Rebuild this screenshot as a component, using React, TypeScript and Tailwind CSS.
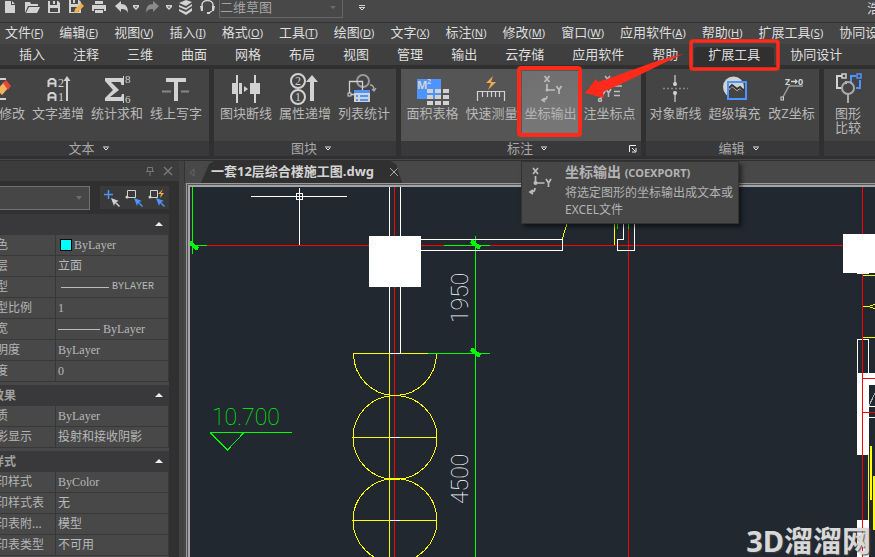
import React from "react";

const G = "#d2d2d2";
const BLUE = "#4d94ff";

const menus: [string, string][] = [
  ["文件", "F"], ["编辑", "E"], ["视图", "V"], ["插入", "I"], ["格式", "O"],
  ["工具", "T"], ["绘图", "D"], ["文字", "X"], ["标注", "N"], ["修改", "M"],
  ["窗口", "W"], ["应用软件", "A"], ["帮助", "H"], ["扩展工具", "S"], ["协同设计", "C"],
];

const tabs = ["插入", "注释", "三维", "曲面", "网格", "布局", "视图", "管理", "输出", "云存储", "应用软件", "帮助", "扩展工具", "协同设计"];

function Icon({ children }: { children: React.ReactNode }) {
  return (
    <svg width="48" height="35" viewBox="0 0 48 35" className="shrink-0" fill="none" stroke={G} strokeWidth="2" aria-hidden="true">
      {children}
    </svg>
  );
}

function Glyph({ x, y, size, serif, color, children }: { x: number; y: number; size: number; serif?: boolean; color?: string; children: string }) {
  return (
    <text x={x} y={y} fontSize={size} fill={color ?? G} stroke="none" fontWeight={serif ? 400 : 700} fontFamily={serif ? "Liberation Serif, serif" : "Noto Sans, sans-serif"}>
      {children}
    </text>
  );
}

function EditIcon() {
  return (
    <Icon>
      <path d="M25 8h6M25 28h6" />
      <path d="M22 19l7-8 5 5-7 8z" fill="#f2b35c" stroke="none" />
      <path d="M28 12l3-3 5 6-3 4z" fill="#e8453c" stroke="none" />
    </Icon>
  );
}
function TextStepIcon() {
  return (
    <Icon>
      <path d="M14.500 16V10l2-2h3l2 2v6M14.500 12.500h7M14.500 30v-6l2-2h3l2 2v6M14.500 26.500h7" />
      <Glyph x={24} y={16} size={12} serif>2</Glyph>
      <Glyph x={24} y={30} size={12} serif>1</Glyph>
      <path d="M33 30V8" />
      <path d="M33 5l3.500 5h-7z" fill={G} stroke="none" />
    </Icon>
  );
}
function SumIcon() {
  return (
    <Icon>
      <path d="M12 7h18v7h-1.500l-1-3H18l8 8-9 7h11l1-3H30v7H12v-3l8-8-8-9z" fill={G} stroke="none" />
      <path d="M30.500 5v9M30.500 23v9" strokeWidth="1" />
      <Glyph x={32} y={12} size={11} serif>8</Glyph>
      <Glyph x={32} y={32} size={11} serif>6</Glyph>
    </Icon>
  );
}
function LineTextIcon() {
  return (
    <Icon>
      <path d="M14 7h20v4h-8v19h-4V11h-8z" fill={G} stroke="none" />
      <path d="M10 20.500h9M29 20.500h8" stroke="#888" />
    </Icon>
  );
}
function BlockBreakIcon() {
  return (
    <Icon>
      <path d="M10 12h5v11h-5zM17 12h3v11h-3zM28 12h4v11h-4zM34 12h4v11h-4z" fill={G} stroke="none" />
      <path d="M15 4v28M33 4v28" />
      <path d="M22 15l4 3-4 3z" fill={G} stroke="none" />
    </Icon>
  );
}
function AttrStepIcon() {
  return (
    <Icon>
      <circle cx="17" cy="10" r="7" />
      <circle cx="17" cy="26" r="7" />
      <Glyph x={14} y={14} size={12} serif>2</Glyph>
      <Glyph x={14} y={30} size={12} serif>1</Glyph>
      <path d="M31 4l6 7h-4v19h-4V11h-4z" fill={G} stroke="none" />
    </Icon>
  );
}
function ListIcon() {
  return (
    <Icon>
      <circle cx="23" cy="10" r="6" stroke="#999" />
      <path d="M9.500 23V10.500h13V22M9.500 23.500h6" strokeWidth="1.300" />
      <rect x="8" y="22" width="3" height="3" fill="#444" strokeWidth="1" />
      <rect x="14" y="19" width="16" height="12" fill={G} stroke="none" />
      <path d="M14 19h16v3H14zM16 24h2v2h-2zM16 28h2v2h-2zM20 24h8v2h-8zM20 28h8v2h-8z" fill={BLUE} stroke="none" />
      <path d="M30 14c3 0 4 2 4 5m-2-1l2 2 2-3" stroke="#aaa" strokeWidth="1.300" />
    </Icon>
  );
}
function AreaIcon() {
  return (
    <Icon>
      <rect x="9" y="8" width="24" height="20" fill={BLUE} stroke="none" />
      <Glyph x={9} y={18} size={11}>M</Glyph>
      <Glyph x={19} y={13} size={7}>2</Glyph>
      <g fill={G} stroke="none">
        {[18, 24, 30].map((y) => [19, 27, 35].map((x) => <rect key={`${x}-${y}`} x={x} y={y} width="6" height="4" />))}
      </g>
    </Icon>
  );
}
function MeasureIcon() {
  return (
    <Icon>
      <path d="M26 5l-7 7h5l-3 7 8-8h-5z" fill="#f3aa4e" stroke="none" />
      <path d="M10.500 30v-9.500h27V30M15.500 21v5M20.500 21v5M24.500 21v5M28.500 21v5M32.500 21v5" strokeWidth="1.200" />
    </Icon>
  );
}
function CoordIcon() {
  return (
    <Icon>
      <g stroke="#bdbdbd">
        <path d="M17.500 5l5 6M22.500 5l-5 6M20 13v6h8M29.500 15l2.500 4 2.500-4M32 19v4" strokeWidth="1.700" />
        <circle cx="20" cy="19" r="1.500" fill="#bdbdbd" stroke="none" />
        <path d="M20 25c0 3-1 4-4 4m2-2l-3 2 3 2" strokeWidth="1.500" />
      </g>
    </Icon>
  );
}
function CoordPointIcon() {
  return (
    <Icon>
      <g stroke="#bdbdbd" strokeWidth="1.500">
        <path d="M19 5l5 6M24 5l-5 6M15 27l7-12h14" />
        <circle cx="14" cy="29" r="1.500" />
        <path d="M20 18l2.500 4 2.500-4M22.500 22v4M28 20.500h6M28 24.500h6" />
      </g>
    </Icon>
  );
}
function BreakIcon() {
  return (
    <Icon>
      <path d="M24 4v11M24 20v11" stroke="#999" />
      <path d="M12 17.500h25" stroke="#888" strokeDasharray="2 2" strokeWidth="1.500" />
      <circle cx="24" cy="13" r="2" fill={G} stroke="none" />
      <circle cx="24" cy="22" r="2" fill={G} stroke="none" />
    </Icon>
  );
}
function FillIcon() {
  return (
    <Icon>
      <circle cx="22.500" cy="16" r="10.500" fill={G} stroke="none" />
      <path d="M18 19l3-3 5 4 3-2 5 4v5H18z" fill="#444" stroke="none" />
      <path d="M18 17l3-3 5 4 3-2 4 4" stroke="#333" />
      <rect x="17" y="11" width="18" height="17" stroke={BLUE} />
    </Icon>
  );
}
function ZIcon() {
  return (
    <Icon>
      <Glyph x={17} y={14} size={9}>Z</Glyph>
      <Glyph x={30} y={14} size={9}>0</Glyph>
      <path d="M23 10.500h6m-2-2l2 2-2 2" strokeWidth="1.300" />
      <path d="M15 26l6-11h14" stroke="#999" strokeWidth="1.500" />
      <rect x="13" y="26" width="2.500" height="3" strokeWidth="1" />
    </Icon>
  );
}
function CompareIcon() {
  return (
    <Icon>
      <path d="M18 5h-5v12h5M22 10v3" />
      <rect x="18" y="3" width="4" height="4" strokeWidth="1.500" />
      <path d="M32 5h-5v8m5 4h4V9" stroke={BLUE} />
      <rect x="33" y="3" width="4" height="4" stroke={BLUE} strokeWidth="1.500" />
      <circle cx="24" cy="17" r="6" stroke="#aaa" />
      <path d="M24 23v9" stroke="#aaa" />
    </Icon>
  );
}

type Tool = { label: string; icon: React.ReactNode; hot?: boolean };

function ToolButton({ label, icon, hot }: Tool) {
  return (
    <button
      className={
        "flex h-[65px] shrink-0 flex-col items-center px-[3px] whitespace-nowrap text-[13px] leading-[14px] " +
        (hot ? "bg-gradient-to-b from-[#707070] to-[#787878] text-[#b4b4b4]" : "text-[#b8b8b8]")
      }
    >
      {icon}
      <span>{label}</span>
    </button>
  );
}

function Down() {
  return (
    <svg width="6" height="5" viewBox="0 0 6 5" aria-hidden="true">
      <path d="M0 1h6M1 2l2 2 2-2" fill="none" stroke="#e6e6e6" strokeWidth="1" />
    </svg>
  );
}

type PanelProps = { title: string; tools: Tool[]; width: string; align?: string; titlePad?: string; hot?: boolean };

function Panel({ title, tools, width, align = "justify-center", titlePad = "pl-3", hot }: PanelProps) {
  return (
    <section className={"flex shrink-0 flex-col overflow-hidden " + width + (hot ? " bg-[#555555]" : " bg-[#444444]")}>
      <div className={"flex h-[72px] gap-px pt-0.5 " + align}>
        {tools.map((t) => <ToolButton key={t.label} {...t} />)}
      </div>
      <div className="flex h-[15px] items-center bg-[#39393b] text-[13px] leading-[15px] text-[#a8a8a8]">
        <button className={"flex flex-1 items-center justify-center gap-2 " + titlePad}>{title}<Down /></button>
        {hot && (
          <button aria-label="标注设置" className="pr-1">
            <svg width="8" height="8" viewBox="0 0 8 8" fill="none" stroke="#eee" aria-hidden="true">
              <path d="M.5 7V.5H7M3 3l3 3M7 3v4H3" />
            </svg>
          </button>
        )}
      </div>
    </section>
  );
}

function QuickIcon({ label, width, children }: { label: string; width: number; children: React.ReactNode }) {
  return (
    <button aria-label={label}>
      <svg width={width} height="15" viewBox={`0 0 ${width} 15`} fill={G} aria-hidden="true">{children}</svg>
    </button>
  );
}

function TitleBar() {
  return (
    <header className="flex h-[23px] shrink-0 items-start border-b border-[#333] bg-[#484848] pl-[5px]">
      <div className="flex shrink-0 gap-2">
        <QuickIcon label="新建" width={12}><path d="M0 1h6v4h4v8H0zM7 1l3 3H7z" /></QuickIcon>
        <QuickIcon label="打开" width={15}><path d="M0 13V2h5l1 2h7v2H3zM4 7h11l-3 6H1z" /></QuickIcon>
        <QuickIcon label="保存" width={13}><path d="M0 1h2v4h7V1h1l2 2v10H0zM5 1h2v3H5zM2 8v4h8V8z" fillRule="evenodd" /></QuickIcon>
        <QuickIcon label="另存为" width={15}>
          <path d="M0 0h2v4h7V0h1l2 2v11H0zM4 0h2v3H4zM2 7v5h8V7z" fillRule="evenodd" />
          <path d="M5 13l1-4 6-6 3 3-6 6z" fill="#f2ad4c" />
        </QuickIcon>
        <QuickIcon label="打印" width={15}><path d="M3 1h8v3H3zM0 5h14v6h-2V9H2v2H0zM3 10h8v3H3z" /></QuickIcon>
        <QuickIcon label="放弃" width={14}><path d="M0 6l6-5v3c5 0 7 3 7 9-1-3-3-4-7-4v3z" /></QuickIcon>
      </div>
      <div className="ml-1 flex shrink-0 gap-1.5">
        <QuickIcon label="放弃列表" width={6}><path d="M0 5h6v2L3 10 0 7zM1.500 6.500h3L3 8z" fillRule="evenodd" /></QuickIcon>
        <QuickIcon label="重做" width={15}><path d="M14 6L8 1v3C3 4 1 7 1 13c1-3 3-4 7-4v3z" fill="#8a8a8a" /></QuickIcon>
        <QuickIcon label="重做列表" width={6}><path d="M0 5h6v2L3 10 0 7zM1.500 6.500h3L3 8z" fillRule="evenodd" /></QuickIcon>
        <QuickIcon label="图层" width={16}><path d="M1 3l7-3 6 2-6 4zM1 5l7 3 6-4v2l-6 4-7-3zM1 9l7 3 6-4v3l-6 4-7-4z" /></QuickIcon>
        <QuickIcon label="客服" width={15}>
          <path d="M2 8V5c0-6 11-6 11 0v4M12 11l-3 2" fill="none" stroke={G} strokeWidth="1.500" />
          <path d="M0 6h3v5H1zM12 6h3l-1 5h-2zM7 12h3v2H7z" />
        </QuickIcon>
      </div>
      <div className="relative ml-1 h-[18px] w-[124px] shrink-0 border border-t-0 border-[#666]">
        <select aria-label="工作空间" className="block h-[14px] w-full appearance-none bg-transparent text-[13px] leading-[14px] text-[#a4a4a4] outline-none">
          <option>二维草图</option>
        </select>
        <svg className="pointer-events-none absolute top-1.5 right-1.5" width="6" height="4" viewBox="0 0 6 4" fill="#6c6c6c" aria-hidden="true"><path d="M0 0h6L3 3z" /></svg>
      </div>
      <button aria-label="自定义快速访问工具栏" className="ml-4 shrink-0">
        <svg width="6" height="13" viewBox="0 0 6 13" fill="none" stroke={G} aria-hidden="true"><path d="M0 5.500h6M0 7.500h6M1 8l2 2 2-2" /></svg>
      </button>
      <div className="ml-auto w-2 shrink-0 overflow-hidden text-[13px] leading-[16px] whitespace-nowrap text-[#ddd]">浩辰CAD</div>
    </header>
  );
}

function CadPointer({ x, color }: { x: number; color: string }) {
  return <path d={`M${x} 10l8 3-3 1 4 4-1 1-4-4-1 3z`} fill={color} stroke="none" />;
}

type Row = [string, React.ReactNode];
const groups: { title: string; rows: Row[] }[] = [
  {
    title: "常规",
    rows: [
      ["颜色", <span className="flex items-center gap-0.5"><i className="ml-0.5 h-3 w-3 border border-black bg-[#00ffff]" />ByLayer</span>],
      ["图层", "立面"],
      ["线型", <span className="flex items-center gap-[3px] font-['Liberation_Mono',monospace] text-[10px]"><i className="ml-[3px] h-px w-12 bg-[#bbb]" />BYLAYER</span>],
      ["线型比例", "1"],
      ["线宽", <span className="flex items-center gap-[3px]"><i className="h-px w-[42px] bg-[#bbb]" />ByLayer</span>],
      ["透明度", "ByLayer"],
      ["厚度", "0"],
    ],
  },
  { title: "三维效果", rows: [["材质", "ByLayer"], ["阴影显示", "投射和接收阴影"]] },
  { title: "打印样式", rows: [["打印样式", "ByColor"], ["打印样式表", "无"], ["打印表附...", "模型"], ["打印表类型", "不可用"]] },
];

function Palette() {
  return (
    <aside className="-ml-8 flex w-[211px] shrink-0 flex-col bg-[#303030]">
      <div className="flex h-5 shrink-0 items-center justify-end gap-2 bg-[#3c3c3d] pr-1.5">
        <button aria-label="固定"><svg width="10" height="10" viewBox="0 0 10 10" fill="none" stroke="#777" aria-hidden="true"><path d="M2.500 5V1.500h5V5M1 5.500h8M5 6v4" /></svg></button>
        <button aria-label="关闭特性"><svg width="10" height="10" viewBox="0 0 10 10" stroke="#777" strokeWidth="1.500" aria-hidden="true"><path d="M1 1l8 8M9 1L1 9" /></svg></button>
      </div>
      <div className="mt-[5px] flex shrink-0 gap-2.5 pr-2.5">
        <div className="relative h-6 flex-1">
          <select aria-label="对象类型" className="block h-6 w-full appearance-none border border-[#707070] bg-[#464646] outline-none"><option></option></select>
          <svg className="pointer-events-none absolute top-2.5 right-2" width="6" height="4" viewBox="0 0 6 4" fill="#6c6c6c" aria-hidden="true"><path d="M0 0h6L3 4z" /></svg>
        </div>
        <div className="flex h-[23px] w-[69px] items-start gap-0.5 bg-[#3a3a3b] pt-0.5 pl-0.5">
          <button aria-label="切换添加"><svg width="20" height="20" viewBox="0 0 20 20" fill="none" stroke={BLUE} aria-hidden="true"><path d="M2 6.500h9M6.500 2v9" strokeWidth="1.500" /><CadPointer x={9} color={G} /></svg></button>
          <button aria-label="选择对象"><svg width="20" height="20" viewBox="0 0 20 20" fill="none" stroke={G} aria-hidden="true"><path d="M3.500 9V2.500h8v7H4" /><circle cx="3" cy="9" r="1.500" fill={G} stroke="none" /><CadPointer x={10} color={BLUE} /></svg></button>
          <button aria-label="快速选择"><svg width="20" height="20" viewBox="0 0 20 20" fill="none" stroke={G} aria-hidden="true"><path d="M4.500 9V2.500h7v7H4" /><circle cx="4" cy="9" r="1.500" fill={G} stroke="none" /><path d="M17 1l-5 5h3l-1 4 4-5h-3z" fill="#f2ad4c" stroke="none" /><CadPointer x={10} color={BLUE} /></svg></button>
        </div>
      </div>
      <div className="mt-1 mr-2.5 flex min-h-0 flex-1 flex-col gap-[3px] overflow-hidden bg-[#484848]">
        {groups.map((g) => (
          <section key={g.title} className="shrink-0">
            <h2 className="flex h-[21px] items-center justify-between bg-[#39393b] pr-1.5 text-xs font-bold text-[#a0a0a0]">
              {g.title}
              <svg width="8" height="5" viewBox="0 0 8 5" fill="#eee" aria-hidden="true"><path d="M4 0l4 4H0z" /></svg>
            </h2>
            <table className="w-full table-fixed border-separate border-spacing-0 text-xs">
              <tbody>
                {g.rows.map(([k, v]) => (
                  <tr key={k} className="h-[21px]">
                    <th scope="row" className="w-[88px] border-r border-b border-[#383838] p-0 pl-4 text-left leading-4 font-normal whitespace-nowrap text-[#b4b4b4]">{k}</th>
                    <td className="border-r border-b border-[#383838] p-0 pl-0.5 font-['Liberation_Serif','Noto_Sans_CJK_SC',serif] leading-4 whitespace-nowrap text-[#b8b8b8]">{v}</td>
                  </tr>
                ))}
              </tbody>
            </table>
          </section>
        ))}
      </div>
    </aside>
  );
}

function Tick({ x, y }: { x: number; y: number }) {
  return <path d={`M${x - 4} ${y - 3}l9 7`} stroke="#00ff00" strokeWidth="4" />;
}

function Drawing() {
  const num = { fontFamily: "Roboto, sans-serif", fontWeight: 100, fontSize: 23 };
  return (
    <svg className="block" width="685" height="370" viewBox="190 187 685 370" fill="none" strokeWidth="1" shapeRendering="crispEdges" role="img" aria-label="一套12层综合楼施工图">
      <g stroke="#ff0000">
        <path d="M207 245.500h668M394.500 187v370M628.500 224v333" />
      </g>
      <g stroke="#ffff00">
        <path d="M353 353.500h84M389.500 353v204M353 437.500h84M353 520.500h84" />
        <path d="M353.500 353.500a41.500 42 0 0 0 83 0" />
        <circle cx="395" cy="437.500" r="42" />
        <circle cx="395" cy="520.500" r="42" />
        <path d="M562.500 239l2-8 3-8M614.500 224v21" />
      </g>
      <g stroke="#00ff00">
        <path d="M192.500 187v67M190 245.500h17M444 245.500h46M428 353.500h62M475.500 236v321" />
        <path d="M210 432.500h82M210.500 433l17 17 16-17M617.500 224v5M628.500 224v5" />
      </g>
      <Tick x={193} y={245} />
      <Tick x={475} y={244} />
      <Tick x={475} y={352} />
      <g stroke="#ffffff">
        <path d="M251 196.500h96M299.500 188v57M389.500 187v166M400.500 187v166M390 353.500h11M390 437.500h10M390 520.500h10" />
        <path d="M421 239.500h141.500v11H421M623.500 224v15.500h-6v11h17V224" />
        <path d="M296.500 193.500h6v6h-6z" />
      </g>
      <path d="M369 236h52v51h-52z" fill="#fff" />
      <path d="M843 234h32v39h-6v1h-12v-1h-14zM857 373h18v12h-6v70h-12zM857 520h12v37h-12z" fill="#fff" />
      <path d="M857.500 373v-33.500h11V373M869 406.500h6M869 417.500h6" stroke="#fff" />
      <path d="M869 406l6-13" stroke="#aaa" />
      <path d="M862 275.500h13M862 306.500h6l7-2M868 306.500l7 2M862 337.500h13M868.500 455v65" stroke="#ffff00" />
      <path d="M871 446v54M874 476v54" stroke="#ffff00" strokeWidth="2" />
      <path d="M862.500 187v47M862.500 274v283M862 378.500h13M862 412.500h13" stroke="#ff0000" />
      <text x="212" y="425" fill="#00ff00" {...num}>10.700</text>
      <text transform="translate(468 323) rotate(-90)" fill="#fff" {...num}>1950</text>
      <text transform="translate(468 504) rotate(-90)" fill="#fff" {...num}>4500</text>
    </svg>
  );
}

function Workspace() {
  return (
    <main className="flex min-w-0 flex-1 flex-col border-l-[5px] border-[#424242] bg-[#484848]">
      <div className="flex h-[22px] shrink-0 items-stretch border-l border-[#333]">
        <button aria-label="上一个标签" className="w-4 pl-1"><svg width="6" height="9" viewBox="0 0 6 9" fill="none" stroke="#666" aria-hidden="true"><path d="M5 1v7L1 4.500z" /></svg></button>
        <div className="flex items-center gap-4 bg-[#303030] pr-1 pl-2.5 text-[13px] text-[#d4d4d4] [clip-path:polygon(0_100%,8px_15%,13px_0,calc(100%-12px)_0,calc(100%-6px)_15%,100%_100%)]">
          <span className="font-bold whitespace-nowrap">一套12层综合楼施工图.dwg</span>
          <button aria-label="关闭图纸"><svg width="8" height="8" viewBox="0 0 8 8" stroke="#aaa" aria-hidden="true"><path d="M0 0l8 8M8 0L0 8" /></svg></button>
        </div>
      </div>
      <div className="ml-0.5 flex min-h-0 flex-1 border-t border-l border-[#999] bg-[#555] pt-px pl-px">
        <div className="relative min-w-0 flex-1 overflow-hidden border-t-2 border-l-2 border-[#a5a5a5] bg-[#212830]">
          <Drawing />
          <div className="absolute right-1 -bottom-0.5 text-[29px] leading-[36px] font-bold whitespace-nowrap text-[#d8d8d8] [text-shadow:1px_1px_2px_#444]">3D溜溜网</div>
        </div>
      </div>
    </main>
  );
}

export default function App() {
  return (
    <div className="relative flex h-screen flex-col overflow-hidden bg-[#303030] font-['Noto_Sans','Noto_Sans_CJK_SC',sans-serif]">
      <TitleBar />
      <nav aria-label="菜单" className="flex h-[21px] shrink-0 items-center gap-4 overflow-hidden bg-[#464646] pb-0.5 pl-[5px] text-[13px] leading-[20px] whitespace-nowrap text-[#dedede]">
        {menus.map(([name, key]) => (
          <button key={name} className="shrink-0">{name}<span className="text-[11px]">(<u>{key}</u>)</span></button>
        ))}
      </nav>
      <nav aria-label="功能区" className="flex h-[21px] shrink-0 items-end overflow-hidden bg-[#3f3f3f] pl-[5px] text-[13px] leading-[15px] whitespace-nowrap text-[#dedede]">
        {tabs.map((t) => (
          <button key={t} className={"h-[18px] shrink-0 px-[14px] pb-[3px] " + (t === "扩展工具" ? "mx-0.5 rounded-t bg-[#303030]" : "")}>{t}</button>
        ))}
      </nav>
      <div className="flex h-[95px] shrink-0 gap-[5px] overflow-hidden border-b border-[#484848] pt-1 pb-[3px]">
        <Panel title="文本" width="w-[209px]" align="justify-end pr-1" titlePad="pr-8" tools={[
          { label: "文字修改", icon: <EditIcon /> },
          { label: "文字递增", icon: <TextStepIcon /> },
          { label: "统计求和", icon: <SumIcon /> },
          { label: "线上写字", icon: <LineTextIcon /> },
        ]} />
        <Panel title="图块" width="w-[182px]" tools={[
          { label: "图块断线", icon: <BlockBreakIcon /> },
          { label: "属性递增", icon: <AttrStepIcon /> },
          { label: "列表统计", icon: <ListIcon /> },
        ]} />
        <Panel title="标注" width="w-[240px]" titlePad="pl-6" hot tools={[
          { label: "面积表格", icon: <AreaIcon /> },
          { label: "快速测量", icon: <MeasureIcon /> },
          { label: "坐标输出", icon: <CoordIcon />, hot: true },
          { label: "注坐标点", icon: <CoordPointIcon /> },
        ]} />
        <Panel title="编辑" width="w-[173px]" tools={[
          { label: "对象断线", icon: <BreakIcon /> },
          { label: "超级填充", icon: <FillIcon /> },
          { label: "改Z坐标", icon: <ZIcon /> },
        ]} />
        <section className="flex min-w-0 flex-1 flex-col overflow-hidden bg-[#444444]">
          <div className="h-[72px] pt-0.5">
            <button className="flex w-12 flex-col items-center text-[13px] leading-[14px] text-[#b8b8b8]"><CompareIcon /><span className="w-[26px]">图形比较</span></button>
          </div>
          <div className="h-[15px] bg-[#39393b]" />
        </section>
      </div>
      <div className="flex min-h-0 flex-1 pt-px">
        <Palette />
        <Workspace />
      </div>

      <div role="tooltip" className="absolute top-[161px] left-[521px] flex w-[218px] gap-[7px] border border-[#333] bg-[#474747] pt-[3px] pb-[5px] text-[#b4b4b4] shadow-[3px_3px_4px_rgba(0,0,0,0.5)]">
        <svg width="36" height="36" viewBox="4 2 36 36" className="shrink-0" fill="none" stroke="#bdbdbd" strokeWidth="1.700" aria-hidden="true">
          <path d="M15 5l5 6M20 5l-5 6M17.500 13v7h9M28 16l2.500 4 2.500-4M30.500 20v4M17 25c0 3-1 4-4 4m2-2l-3 2 3 2" />
          <circle cx="17.500" cy="20" r="2" fill="#bdbdbd" stroke="none" />
        </svg>
        <div className="whitespace-nowrap">
          <div className="text-sm leading-[14px] font-bold">坐标输出 <span className="text-[11px]">(COEXPORT)</span></div>
          <p className="mt-1 text-xs leading-[17px]">将选定图形的坐标输出成文本或<br />EXCEL文件</p>
        </div>
      </div>
      <svg className="pointer-events-none absolute top-0 left-0" width="875" height="160" viewBox="0 0 875 160" fill="none" stroke="#ff2a1a" strokeWidth="4" aria-hidden="true">
        <rect x="519" y="68" width="61" height="67" rx="2" />
        <rect x="691" y="41" width="87" height="28" rx="2" strokeWidth="3.500" />
        <path d="M585 93l11-14 2 3c28-9 57-22 85-28-26 12-52 26-80 38l1 6z" fill="#ff2a1a" stroke="none" />
      </svg>
    </div>
  );
}
